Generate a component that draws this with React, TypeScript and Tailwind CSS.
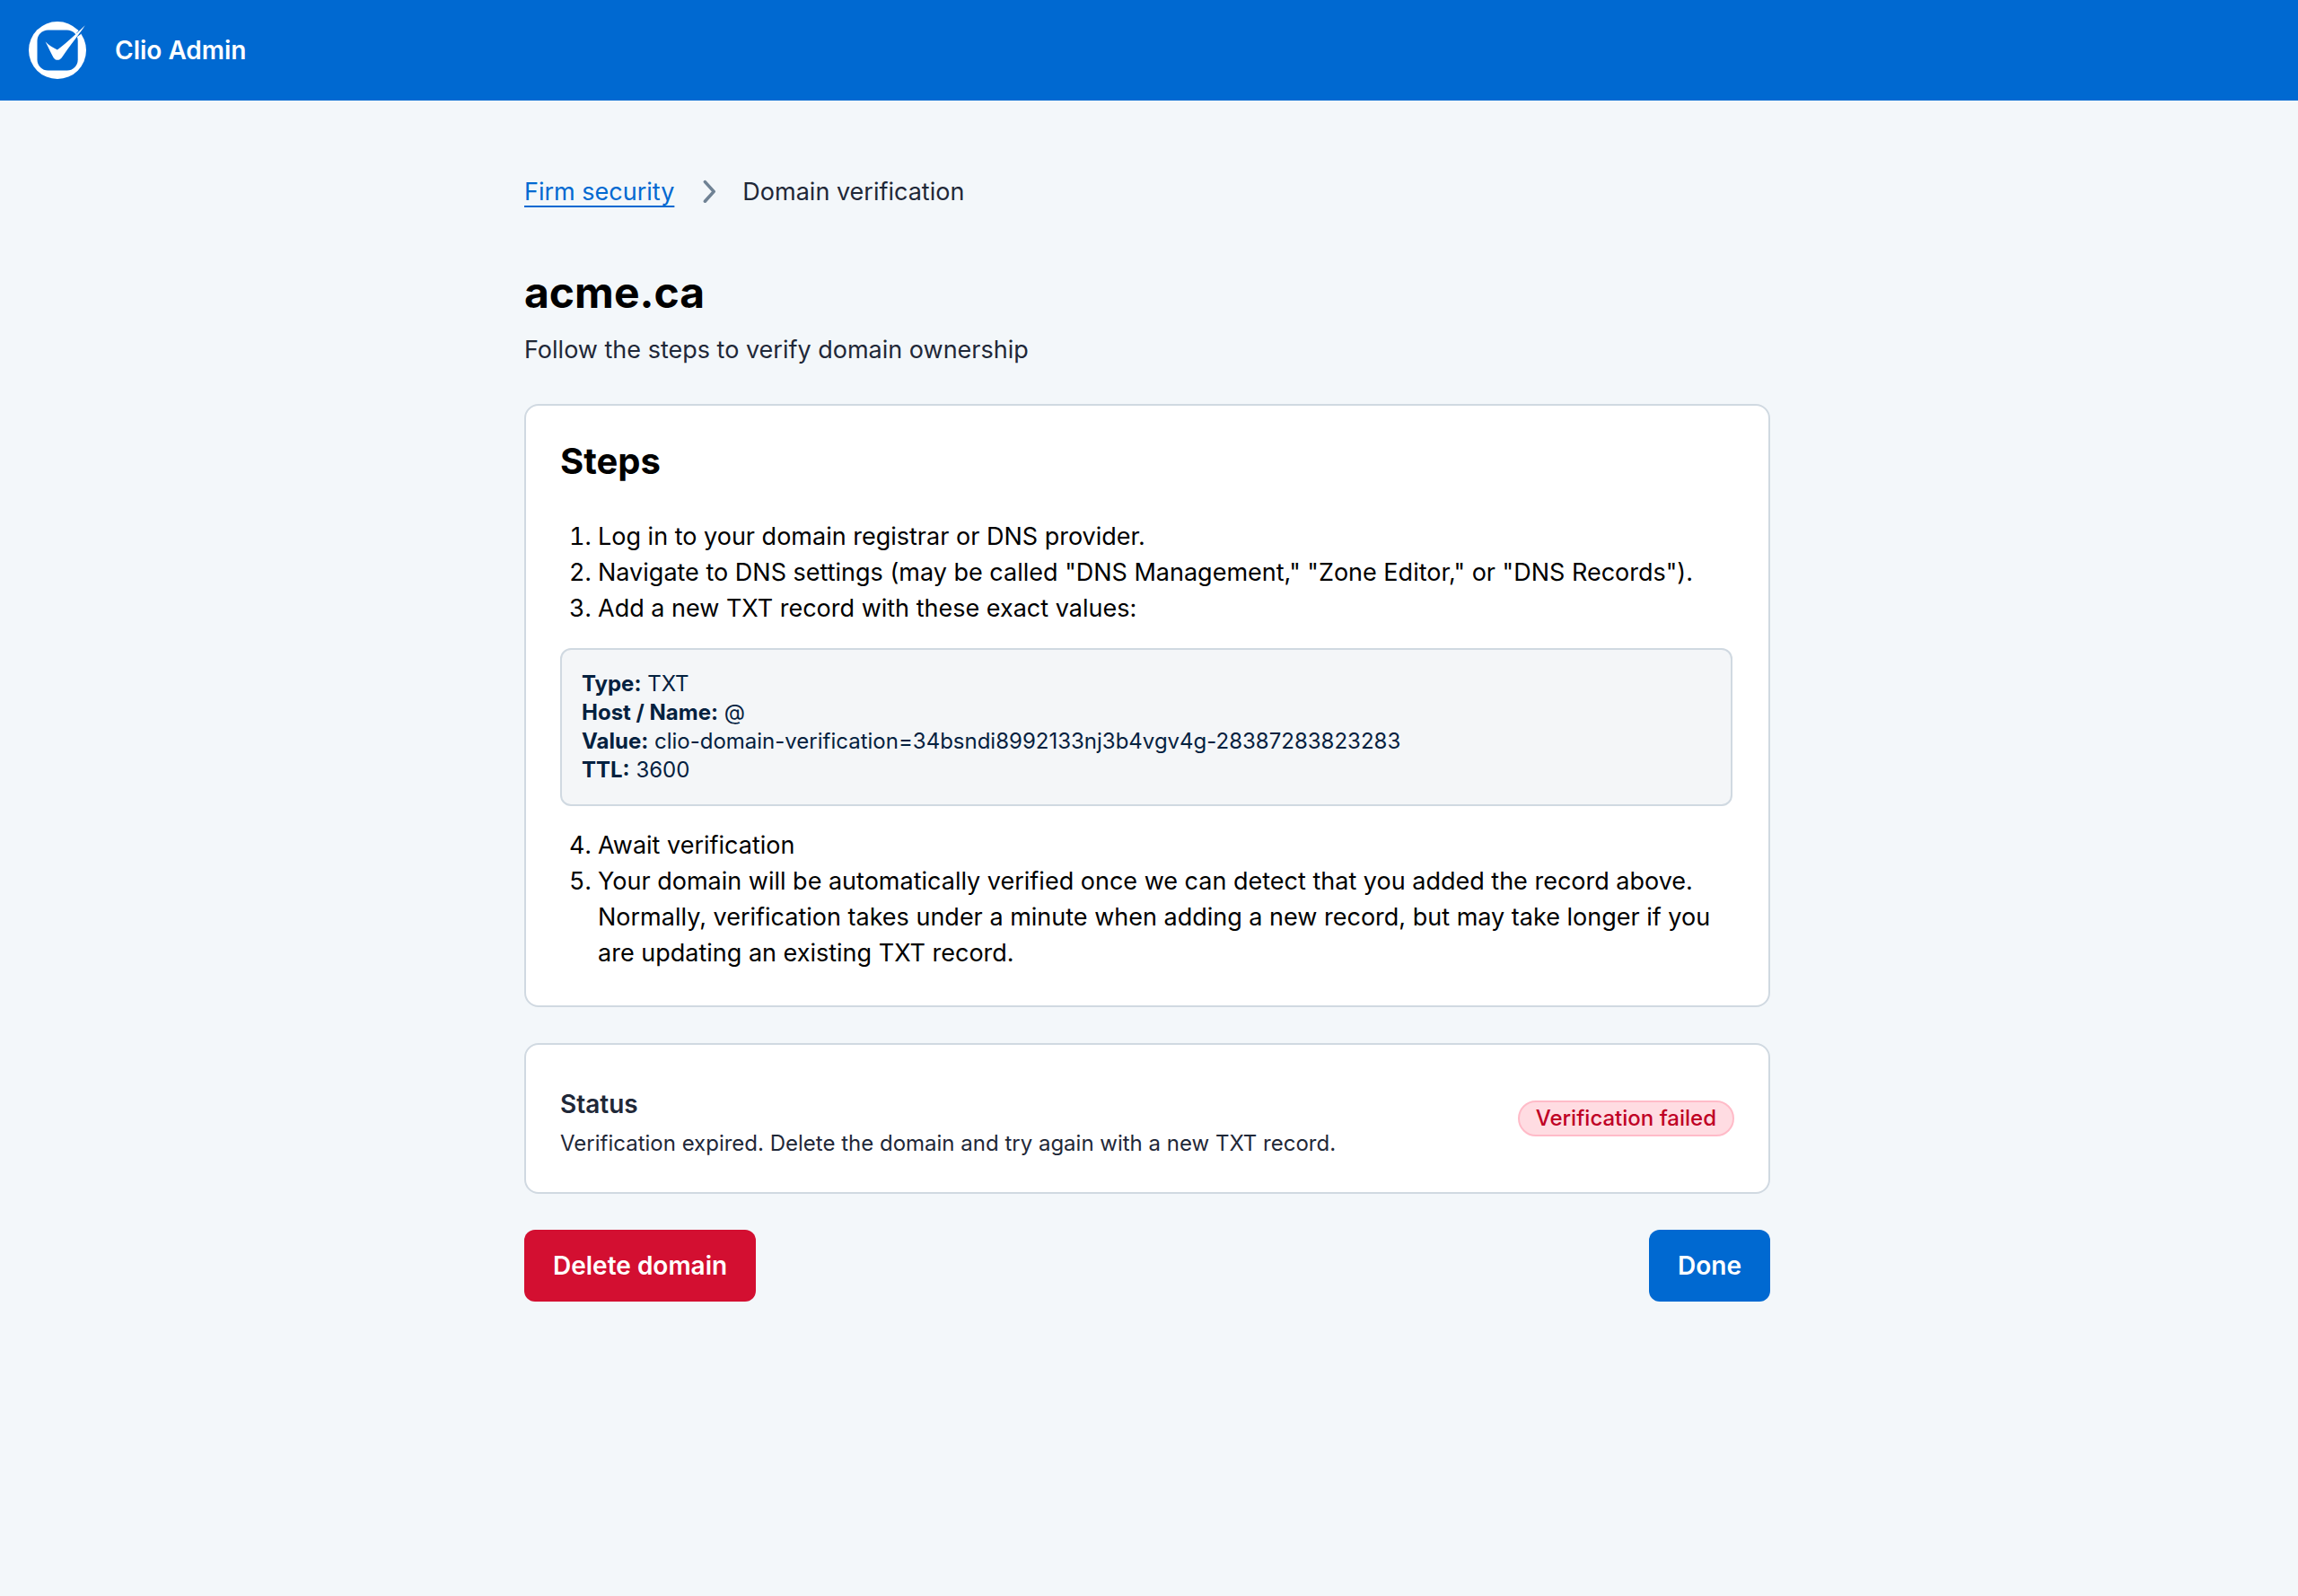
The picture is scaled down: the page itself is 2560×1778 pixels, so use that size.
function ClioLogo() {
  return (
    <svg viewBox="0 0 64 64" className="h-16 w-16 overflow-visible" aria-hidden>
      <circle cx="32" cy="32" r="32" fill="#ffffff" />
      <rect x="9.5" y="9.5" width="45.2" height="45" rx="12" fill="#0069d1" />
      {/* thin blue edge keeps the tail of the check apart from the ring */}
      <path
        d="M53.4 12.6 L62.6 3.6 L64 5 L57.4 14.4 L54 17 Z"
        fill="#0069d1"
      />
      <path
        d="M18.6 22.6 C22.5 26.6 26.6 29.2 31.9 31.4 C38 27.4 51 15.5 62.8 4.2 C56 14.5 46 26.5 36.8 40.2 C34.4 43.6 29.6 43.6 27.6 40.2 C24.2 34.6 22 28.6 18.6 22.6 Z"
        fill="#ffffff"
      />
    </svg>
  );
}

function Chevron() {
  return (
    <svg viewBox="0 0 16 28" className="h-7 w-4" fill="none" aria-hidden>
      <path
        d="M2.4 2.6 L12.2 13.4 L2.4 24.2"
        stroke="#6f8294"
        strokeWidth="3.6"
        strokeLinecap="round"
        strokeLinejoin="round"
      />
    </svg>
  );
}

const record = [
  { label: "Type:", value: "TXT" },
  { label: "Host / Name:", value: "@" },
  {
    label: "Value:",
    value: "clio-domain-verification=34bsndi8992133nj3b4vgv4g-28387283823283",
  },
  { label: "TTL:", value: "3600" },
];

function Steps() {
  return (
    <section className="mt-10 rounded-2xl border-2 border-[#d0d9e1] bg-white py-[38px] pl-[38px] pr-10 text-black">
      <h2 className="text-[40px] font-bold leading-[48px]">Steps</h2>
      <ol className="mt-10 list-decimal pl-[42px] text-[27px] leading-10">
        <li>Log in to your domain registrar or DNS provider.</li>
        <li>
          Navigate to DNS settings (may be called "DNS Management," "Zone
          Editor," or "DNS Records").
        </li>
        <li>Add a new TXT record with these exact values:</li>
      </ol>

      <dl className="my-6 rounded-xl border-2 border-[#d0d9e1] bg-[#f4f6f8] p-[22px] text-2xl leading-8 text-[#04213f]">
        {record.map((row) => (
          <div key={row.label}>
            <dt className="inline font-bold">{row.label}</dt>{" "}
            <dd className="inline">{row.value}</dd>
          </div>
        ))}
      </dl>

      <ol start={4} className="list-decimal pl-[42px] text-[27px] leading-10">
        <li>Await verification</li>
        <li>
          Your domain will be automatically verified once we can detect that
          you added the record above. Normally, verification takes under a
          minute when adding a new record, but may take longer if you are
          updating an existing TXT record.
        </li>
      </ol>
    </section>
  );
}

function Status() {
  return (
    <section className="mt-10 flex items-center justify-between gap-8 rounded-2xl border-2 border-[#d0d9e1] bg-white p-[38px]">
      <div className="pt-2">
        <h2 className="text-[28px] font-semibold leading-10">Status</h2>
        <p className="mt-2 text-2xl leading-8">
          Verification expired. Delete the domain and try again with a new TXT
          record.
        </p>
      </div>
      <span className="flex h-10 shrink-0 items-center rounded-full border-2 border-[#ffbbc8] bg-[#ffdce2] px-[18px] text-2xl font-medium leading-8 text-[#bf0025]">
        Verification failed
      </span>
    </section>
  );
}

export default function App() {
  return (
    <div className="min-h-screen bg-[#f3f7fa] font-['Inter',sans-serif] text-[#1f2838]">
      <header className="flex h-28 items-center gap-8 bg-[#0069d1] px-8">
        <ClioLogo />
        <span className="text-[28px] font-semibold leading-10 text-white">
          Clio Admin
        </span>
      </header>

      <main className="mx-auto w-full max-w-[1392px] pb-20 pr-1 pt-[82px]">
        <nav
          aria-label="Breadcrumb"
          className="flex items-center text-[27px] leading-10"
        >
          <a
            href="#firm-security"
            className="text-[#0069d1] underline decoration-2 underline-offset-[6px]"
          >
            Firm security
          </a>
          <span className="ml-8 mr-7">
            <Chevron />
          </span>
          <span>Domain verification</span>
        </nav>

        <h1 className="mt-16 text-5xl font-bold leading-[56px] text-black">
          acme.ca
        </h1>
        <p className="mt-4 text-[27px] leading-10">
          Follow the steps to verify domain ownership
        </p>

        <Steps />
        <Status />

        <div className="mt-10 flex justify-between">
          <button
            type="button"
            className="h-20 rounded-xl bg-[#d30f31] px-8 text-[28px] font-semibold leading-10 text-white"
          >
            Delete domain
          </button>
          <button
            type="button"
            className="h-20 rounded-xl bg-[#0069d1] px-8 text-[28px] font-semibold leading-10 text-white"
          >
            Done
          </button>
        </div>
      </main>
    </div>
  );
}
